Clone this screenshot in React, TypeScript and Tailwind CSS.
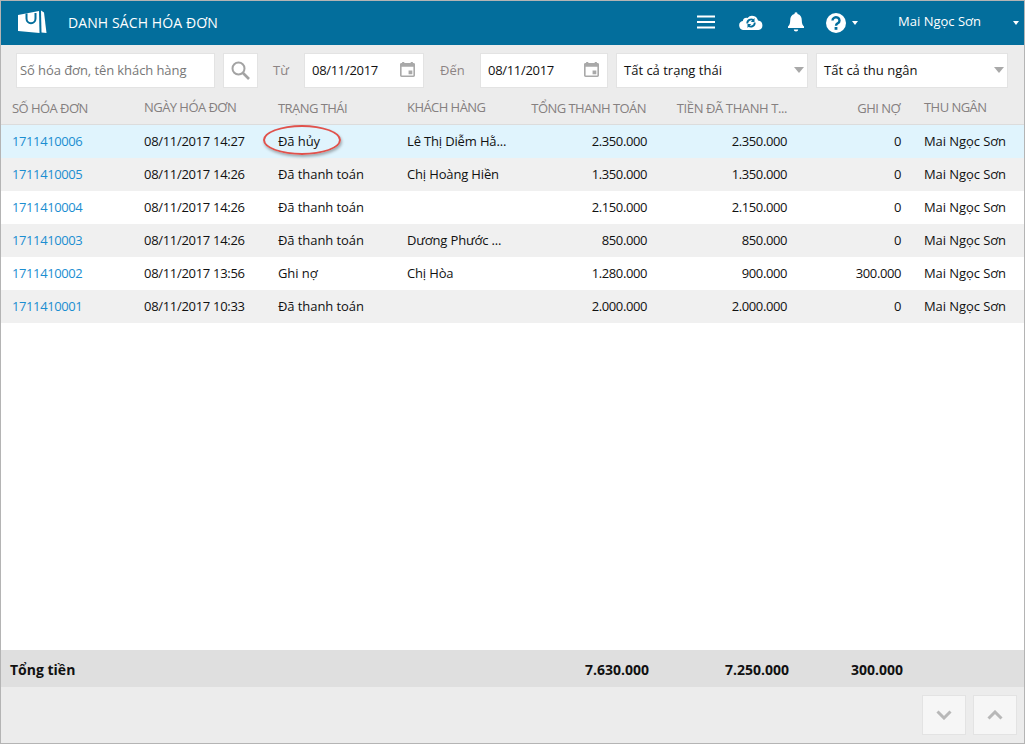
import React from "react";

const rows = [
  ["1711410006", "08/11/2017 14:27", "Đã hủy", "Lê Thị Diễm Hằ...", "2.350.000", "2.350.000", "0"],
  ["1711410005", "08/11/2017 14:26", "Đã thanh toán", "Chị Hoàng Hiền", "1.350.000", "1.350.000", "0"],
  ["1711410004", "08/11/2017 14:26", "Đã thanh toán", "", "2.150.000", "2.150.000", "0"],
  ["1711410003", "08/11/2017 14:26", "Đã thanh toán", "Dương Phước ...", "850.000", "850.000", "0"],
  ["1711410002", "08/11/2017 13:56", "Ghi nợ", "Chị Hòa", "1.280.000", "900.000", "300.000"],
  ["1711410001", "08/11/2017 10:33", "Đã thanh toán", "", "2.000.000", "2.000.000", "0"],
];

const grid = "grid grid-cols-[143px_134px_129px_103px_137px_140px_114px_1fr]";

function Calendar() {
  return (
    <svg width="15" height="15" viewBox="1 0 14 16" preserveAspectRatio="none" className="shrink-0 mb-[2px]">
      <path d="M1 2.500A1.500 1.500 0 0 1 2.500 1H3V0h2v1h6V0h2v1h.5A1.500 1.500 0 0 1 15 2.500v12a1.500 1.500 0 0 1-1.500 1.500h-11A1.500 1.500 0 0 1 1 14.500Z M2.500 5v9.500h11V5Z M9 9h3.500v4H9Z" fill="#a9a9a9" fillRule="evenodd" />
    </svg>
  );
}

function DateBox({ value, w }: { value: string; w: string }) {
  return (
    <div className={"h-[35px] bg-white border border-[#e3e3e3] flex items-center justify-between pl-[7px] pr-[8px] text-[13px] text-[#111] " + w}>
      <span className="tracking-[-0.3px] pt-[2px]">{value}</span>
      <Calendar />
    </div>
  );
}

function SelectBox({ label, w }: { label: string; w: string }) {
  return (
    <div className={"h-[35px] bg-white border border-[#e3e3e3] flex items-center justify-between pl-[7px] pr-[3px] text-[13px] text-[#111] " + w}>
      <span className="pt-[2px]">{label}</span>
      <span className="w-0 h-0 border-x-[5px] border-x-transparent border-t-[6px] border-t-[#a9a9a9]" />
    </div>
  );
}

export default function App() {
  return (
    <div className="w-[1025px] h-[744px] flex flex-col overflow-hidden border border-[#b4b4b4] bg-white text-[13px] text-[#111] font-['Open_Sans',sans-serif]">
      <header className="h-[44px] shrink-0 bg-[#036e9c] flex items-center text-white">
        <svg width="30" height="26" viewBox="0 0 30 26" className="ml-[16px] mb-[1px]">
          <path d="M1 5 22 1 22.500 23 1 21Z" fill="#fff" />
          <path d="M24 .5 27 2.500 29.500 23 24.500 22.500Z" fill="#fff" />
          <path d="M9.500 3.500V8.500a4.500 4.800 0 0 0 9 0V3" fill="none" stroke="#036e9c" strokeWidth="2" />
        </svg>
        <span className="ml-[21px] text-[14px] tracking-[0.1px] pb-[2px] whitespace-nowrap">DANH SÁCH HÓA ĐƠN</span>
        <div className="ml-auto flex items-center">
          <svg width="18" height="14" viewBox="0 0 18 14" className="mb-[2px]">
            <path d="M0 1.500h18M0 7h18M0 12.500h18" stroke="#fff" strokeWidth="2" />
          </svg>
          <svg width="24" height="16" viewBox="0 0 24 16" className="ml-[24px] mb-[2px]">
            <path d="M5 16a4.500 4.500 0 0 1-1.200-8.900A4 4 0 0 1 8.500 4 6 6 0 0 1 19 6.500 4.800 4.800 0 0 1 19.500 16Z" fill="#fff" />
            <path d="M8.300 9.500A3.800 3.800 0 0 1 14.500 6.300M15.700 8.500A3.800 3.800 0 0 1 9.500 11.700" fill="none" stroke="#036e9c" strokeWidth="1.800" />
            <path d="M15.500 4v4H11.800ZM8.500 14V10h3.700Z" fill="#036e9c" />
          </svg>
          <svg width="16" height="20" viewBox="0 0 18 22" className="ml-[25px] mb-[2px]">
            <path d="M9 0a1.700 1.700 0 0 1 1.700 2C14 2.800 15.500 5.500 15.500 9c0 4 1 5.500 2.500 7v1.800H0V16c1.500-1.500 2.500-3 2.500-7 0-3.500 1.500-6.200 4.800-7A1.700 1.700 0 0 1 9 0Z M6.500 19.300h5a2.500 2.300 0 0 1-5 0Z" fill="#fff" />
          </svg>
          <svg width="20" height="20" viewBox="0 0 20 20" className="ml-[22px]">
            <circle cx="10" cy="10" r="10" fill="#fff" />
            <path d="M6.500 7.500a3.500 3.200 0 1 1 5.300 2.700c-1 .7-1.800 1.200-1.800 2.500" fill="none" stroke="#036e9c" strokeWidth="2.400" />
            <rect x="8.600" y="14" width="2.800" height="2.800" fill="#036e9c" />
          </svg>
          <span className="ml-[6px] w-0 h-0 border-x-[3.500px] border-x-transparent border-t-[4px] border-t-white" />
          <span className="ml-[40px] text-[13px] pb-[2px] whitespace-nowrap">Mai Ngọc Sơn</span>
          <span className="ml-[32px] mr-[5px] w-0 h-0 border-x-[3.500px] border-x-transparent border-t-[4px] border-t-white" />
        </div>
      </header>

      <div className="flex-1 flex flex-col bg-[#ececec] min-h-0">
        <div className="h-[45px] shrink-0 flex items-center pl-[15px] pt-[5px]">
          <div className="w-[199px] h-[35px] bg-white border border-[#e3e3e3] flex items-center pl-[3px] text-[13px] text-[#777] tracking-[-0.08px]">
            <span className="pt-[2px] whitespace-nowrap">Số hóa đơn, tên khách hàng</span>
          </div>
          <div className="ml-[8px] w-[35px] h-[35px] bg-white border border-[#e3e3e3] flex items-center justify-center">
            <svg width="19" height="19" viewBox="0 0 19 19">
              <circle cx="7.500" cy="7.500" r="6" fill="none" stroke="#a3a3a3" strokeWidth="2" />
              <path d="M12 12l6 6" stroke="#a3a3a3" strokeWidth="2.600" />
            </svg>
          </div>
          <span className="ml-[15px] w-[31px] text-[#8c8484] pt-[2px]">Từ</span>
          <DateBox value="08/11/2017" w="w-[120px]" />
          <span className="ml-[16px] w-[40px] text-[#8c8484] pt-[2px]">Đến</span>
          <DateBox value="08/11/2017" w="w-[128px]" />
          <div className="w-[8px]" />
          <SelectBox label="Tất cả trạng thái" w="w-[192px]" />
          <div className="w-[8px]" />
          <SelectBox label="Tất cả thu ngân" w="w-[192px]" />
        </div>

        <div className={grid + " h-[35px] shrink-0 items-center text-[#858080] border-b border-[#dcdcdc] pt-[4px] tracking-[-0.55px] whitespace-nowrap"}>
          <span className="pl-[11px]">SỐ HÓA ĐƠN</span>
          <span className="pb-[2px]">NGÀY HÓA ĐƠN</span>
          <span>TRẠNG THÁI</span>
          <span className="pb-[2px]">KHÁCH HÀNG</span>
          <span className="text-right pr-[1px]">TỔNG THANH TOÁN</span>
          <span className="text-right tracking-[-0.4px]">TIỀN ĐÃ THANH T...</span>
          <span className="text-right pr-[1px]">GHI NỢ</span>
          <span className="pl-[23px] pb-[2px]">THU NGÂN</span>
        </div>

        <div className="flex-1 bg-white min-h-0">
          {rows.map((r, i) => (
            <div key={r[0]} className={grid + " h-[33px] items-center whitespace-nowrap " + (i === 0 ? "bg-[#e0f4fd]" : i % 2 === 1 ? "bg-[#f0f0f0]" : "bg-white")}>
              <span className="pl-[11px] text-[#1b8ed1] tracking-[-0.4px]">{r[0]}</span>
              <span className="tracking-[-0.3px]">{r[1]}</span>
              <span className="relative tracking-[-0.08px]">
                {r[2]}
                {i === 0 && (
                  <span className="absolute left-[-15px] top-[-7px] w-[78px] h-[30px] rounded-[50%] border-2 border-[#e0524c] shadow-[1px_2px_3px_rgba(0,0,0,0.3)]" />
                )}
              </span>
              <span className="tracking-[-0.15px]">{r[3]}</span>
              <span className="text-right tracking-[-0.4px]">{r[4]}</span>
              <span className="text-right tracking-[-0.4px]">{r[5]}</span>
              <span className="text-right tracking-[-0.4px]">{r[6]}</span>
              <span className="pl-[23px] tracking-[-0.08px]">Mai Ngọc Sơn</span>
            </div>
          ))}
        </div>

        <div className={grid + " h-[37px] shrink-0 items-center bg-[#dfdfdf] font-bold text-[14px] text-[#111] pt-[1px]"}>
          <span className="pl-[9px] col-span-4">Tổng tiền</span>
          <span className="text-right translate-x-[2px]">7.630.000</span>
          <span className="text-right translate-x-[2px]">7.250.000</span>
          <span className="text-right translate-x-[2px]">300.000</span>
          <span />
        </div>

        <div className="h-[56px] shrink-0 flex justify-end items-start pt-[8px] pr-[7px] gap-[7px]">
          <div className="w-[44px] h-[40px] bg-[#f6f6f6] border border-[#e3e3e3] flex items-center justify-center">
            <svg width="16" height="10" viewBox="0 0 16 10"><path d="M1.500 1.500 8 8l6.500-6.500" fill="none" stroke="#b8b8b8" strokeWidth="3" /></svg>
          </div>
          <div className="w-[44px] h-[40px] bg-[#f6f6f6] border border-[#e3e3e3] flex items-center justify-center">
            <svg width="16" height="10" viewBox="0 0 16 10"><path d="M1.500 8.500 8 2l6.500 6.500" fill="none" stroke="#b8b8b8" strokeWidth="3" /></svg>
          </div>
        </div>
      </div>
    </div>
  );
}
